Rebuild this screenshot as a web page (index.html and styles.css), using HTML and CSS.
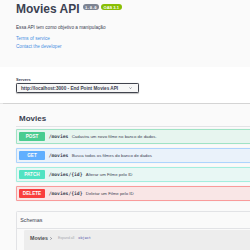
FILE: index.html
```html
<!DOCTYPE html>
<html lang="pt-BR">
<head>
    <meta charset="UTF-8">
    <meta name="viewport" content="width=device-width, initial-scale=1.0">
    <title>Movies API</title>
    <link rel="stylesheet" href="styles.css">
</head>
<body>
    <div class="wrapper info">
        <h2 class="title">
            Movies API
            <span class="version">1.0.0</span>
            <span class="oas">OAS 3.1</span>
        </h2>
        <p class="description">Essa API tem como objetivo a manipulação</p>
        <a class="info-link" href="#">Terms of service</a>
        <a class="info-link" href="#">Contact the developer</a>
    </div>

    <div class="scheme-container">
        <div class="wrapper">
            <div class="servers-label">Servers</div>
            <div class="servers-select">
                <span>http://localhost:3000 - End Point Movies API</span>
                <svg class="chevron" viewBox="0 0 10 6" width="3" height="2">
                    <path d="M1 1l4 4 4-4" fill="none" stroke="#3b4151" stroke-width="1.6"/>
                </svg>
            </div>
        </div>
    </div>

    <div class="wrapper">
        <h3 class="tag">Movies</h3>

        <div class="opblock post">
            <span class="method">POST</span>
            <span class="path">/movies</span>
            <span class="summary">Cadastra um novo filme no banco de dados.</span>
        </div>
        <div class="opblock get">
            <span class="method">GET</span>
            <span class="path">/movies</span>
            <span class="summary">Busca todos os filmes do banco de dados</span>
        </div>
        <div class="opblock patch">
            <span class="method">PATCH</span>
            <span class="path">/movies/{id}</span>
            <span class="summary">Alterar um Filme pelo ID</span>
        </div>
        <div class="opblock delete">
            <span class="method">DELETE</span>
            <span class="path">/movies/{id}</span>
            <span class="summary">Deletar um Filme pelo ID</span>
        </div>

        <section class="models">
            <h4 class="models-title">Schemas</h4>
            <div class="model-container">
                <span class="model-name">Movies</span>
                <svg class="model-arrow" viewBox="0 0 6 10" width="2" height="3">
                    <path d="M1 1l4 4-4 4" fill="none" stroke="#3b4151" stroke-width="1.8"/>
                </svg>
                <span class="expand">Expand all</span>
                <span class="prop-type">object</span>
            </div>
        </section>
    </div>
</body>
</html>
```

FILE: styles.css
```css
html {
    overflow: hidden;
}

body {
    margin: 0;
    width: 560px;
    background: #fafafa;
    color: #3b4151;
    font-family: 'Liberation Sans', Arial, sans-serif;
}

.wrapper {
    padding: 0 16px;
}

/* Info block */
.info {
    padding-top: 2px;
}

.title {
    margin: 0;
    font-size: 12px;
    line-height: 14px;
    font-weight: 700;
    display: flex;
    align-items: flex-start;
}

.version,
.oas {
    margin-top: 2px;
    font-size: 4px;
    line-height: 5px;
    padding: 0.6px 2.5px;
    border-radius: 3px;
    color: #fff;
    font-weight: 700;
}

.version {
    margin-left: 3px;
    background: #7d8492;
    font-family: 'DejaVu Sans Mono', monospace;
    font-size: 3.8px;
}

.oas {
    margin-left: 1.5px;
    background: #89bf04;
    padding: 0.6px 3px;
}

.description {
    margin: 8px 0 0;
    font-size: 4.67px;
    line-height: 7px;
}

.info-link {
    display: block;
    color: #4990e2;
    text-decoration: none;
    font-size: 4.67px;
    line-height: 8px;
}

.info-link:first-of-type {
    margin-top: 4px;
}

/* Servers */
.scheme-container {
    margin: 16px 0 7px;
    padding: 10px 0;
    background: #fff;
    box-shadow: 0 0.5px 1px 0 rgba(0, 0, 0, 0.15);
}

.servers-label {
    font-size: 4px;
    line-height: 5px;
    font-weight: 700;
}

.servers-select {
    margin-top: 1px;
    width: 123px;
    height: 10px;
    box-sizing: border-box;
    padding: 0 4px;
    display: flex;
    align-items: center;
    justify-content: space-between;
    border: 0.8px solid #41444e;
    border-radius: 1.3px;
    box-shadow: 0 0.5px 1px rgba(0, 0, 0, 0.25);
    background: #f7f7f7;
    font-size: 4.67px;
    font-weight: 700;
}

.chevron {
    margin-right: 2px;
}

/* Tag */
.tag {
    margin: 0 0 2px;
    padding: 4px 0 3px 3px;
    font-size: 8px;
    line-height: 9px;
    font-weight: 700;
    border-bottom: 1px solid #e2e3e6;
}

/* Operations */
.opblock {
    display: flex;
    align-items: center;
    margin-bottom: 4.2px;
    padding: 1.67px;
    border: 1px solid;
    border-radius: 1.3px;
    box-shadow: 0 0 1px rgba(0, 0, 0, 0.12);
}

.method {
    min-width: 26.7px;
    padding: 2px 0;
    border-radius: 1px;
    text-align: center;
    color: #fff;
    font-size: 4.67px;
    line-height: 5.5px;
    font-weight: 700;
    text-shadow: 0 0.3px 0 rgba(0, 0, 0, 0.1);
}

.path {
    padding: 0 3.3px;
    font-family: 'DejaVu Sans Mono', monospace;
    font-size: 4.7px;
    font-weight: 700;
}

.summary {
    font-size: 4.33px;
}

.post { background: rgba(73, 204, 144, 0.1); border-color: rgba(73, 204, 144, 0.45); }
.post .method { background: #49cc90; }

.get { background: rgba(97, 175, 254, 0.1); border-color: rgba(97, 175, 254, 0.45); }
.get .method { background: #61affe; }

.patch { background: rgba(80, 227, 194, 0.1); border-color: rgba(80, 227, 194, 0.45); }
.patch .method { background: #50e3c2; }

.delete { background: rgba(249, 62, 62, 0.1); border-color: rgba(249, 62, 62, 0.45); }
.delete .method { background: #f93e3e; }

/* Schemas */
.models {
    margin-top: 10px;
    border: 1px solid #e2e3e6;
    border-radius: 1.3px;
}

.models-title {
    margin: 0;
    padding: 5px 6.7px 5px 3.3px;
    font-size: 5.3px;
    line-height: 6px;
    font-weight: 400;
    border-bottom: 1px solid #e2e3e6;
}

.model-container {
    margin: 1.3px 6.7px 5px;
    padding: 5px 6.3px;
    height: 20px;
    background: rgba(0, 0, 0, 0.05);
    border-radius: 1.3px;
    display: flex;
    align-items: flex-start;
    gap: 2px;
}

.model-name {
    font-size: 5.3px;
    line-height: 6px;
    font-weight: 700;
    color: #505050;
}

.model-arrow {
    margin-top: 1.5px;
}

.expand {
    margin-left: 4px;
    font-size: 3.5px;
    line-height: 6px;
    color: #a6a9b0;
}

.prop-type {
    margin-left: 2px;
    font-family: 'DejaVu Sans Mono', monospace;
    font-size: 3.5px;
    line-height: 6px;
    color: #55a;
}
```
